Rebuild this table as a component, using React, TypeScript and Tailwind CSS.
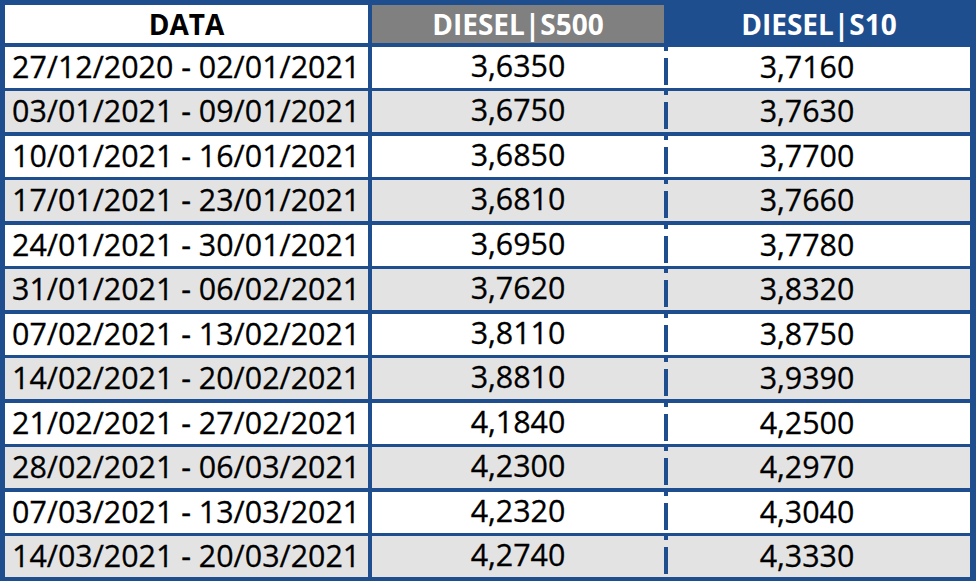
const rows: [string, string, string][] = [
  ["27/12/2020 - 02/01/2021", "3,6350", "3,7160"],
  ["03/01/2021 - 09/01/2021", "3,6750", "3,7630"],
  ["10/01/2021 - 16/01/2021", "3,6850", "3,7700"],
  ["17/01/2021 - 23/01/2021", "3,6810", "3,7660"],
  ["24/01/2021 - 30/01/2021", "3,6950", "3,7780"],
  ["31/01/2021 - 06/02/2021", "3,7620", "3,8320"],
  ["07/02/2021 - 13/02/2021", "3,8110", "3,8750"],
  ["14/02/2021 - 20/02/2021", "3,8810", "3,9390"],
  ["21/02/2021 - 27/02/2021", "4,1840", "4,2500"],
  ["28/02/2021 - 06/03/2021", "4,2300", "4,2970"],
  ["07/03/2021 - 13/03/2021", "4,2320", "4,3040"],
  ["14/03/2021 - 20/03/2021", "4,2740", "4,3330"],
];

export default function App() {
  return (
    <div className="h-[581px] w-[976px] bg-[#1f4e8e] pl-[5px] pt-[5px] font-['Open_Sans',sans-serif] text-black">
      {/* header */}
      <div className="flex h-[38px]">
        <div className="flex w-[363px] items-center justify-center bg-white text-[28px] font-bold leading-none">DATA</div>
        <div className="w-[4px]" />
        <div className="flex w-[292px] items-center justify-center bg-[#808080] text-[28px] font-bold leading-none text-white">
          DIESEL|S500
        </div>
        <div className="w-[4px]" />
        <div className="flex w-[302px] items-center justify-center text-[28px] font-bold leading-none text-white">
          DIESEL|S10
        </div>
      </div>

      {/* body */}
      <div className="flex flex-col gap-[3.5px] pt-[3.5px]">
        {rows.map(([date, s500, s10], i) => {
          const bg = i % 2 === 0 ? "bg-white" : "bg-[#e3e3e3]";
          return (
            <div key={date} className="flex h-[41px]">
              <div className={`flex w-[363px] items-center pl-[7px] text-[30.4px] leading-none [-webkit-text-stroke:0.3px_black] ${bg}`}>{date}</div>
              <div className="w-[4px]" />
              <div className={`flex w-[292px] items-center justify-center pb-[2px] text-[30.4px] leading-none [-webkit-text-stroke:0.3px_black] ${bg}`}>{s500}</div>
              <div className={`flex w-[4px] flex-col ${bg}`}>
                <div className="h-[4px] bg-[#1f4e8e]" />
                <div className="h-[7px]" />
                <div className="flex-1 bg-[#1f4e8e]" />
                <div className="h-[3px]" />
              </div>
              <div className={`flex w-[302px] items-center justify-center pr-[24px] text-[30.4px] leading-none [-webkit-text-stroke:0.3px_black] ${bg}`}>{s10}</div>
            </div>
          );
        })}
      </div>
    </div>
  );
}
